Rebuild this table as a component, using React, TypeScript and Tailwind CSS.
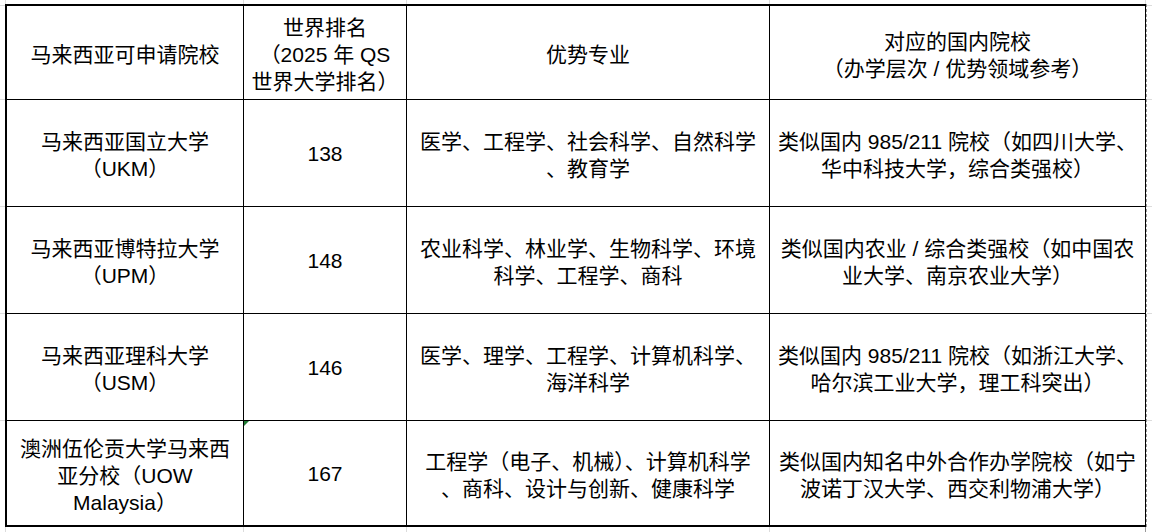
const header = [
  ["马来西亚可申请院校"],
  ["世界排名", "（2025 年 QS", "世界大学排名）"],
  ["优势专业"],
  ["对应的国内院校", "（办学层次 / 优势领域参考）"],
]

const rows = [
  {
    school: ["马来西亚国立大学", "（UKM）"],
    rank: "138",
    majors: ["医学、工程学、社会科学、自然科学", "、教育学"],
    match: ["类似国内 985/211 院校（如四川大学、", "华中科技大学，综合类强校）"],
  },
  {
    school: ["马来西亚博特拉大学", "（UPM）"],
    rank: "148",
    majors: ["农业科学、林业学、生物科学、环境", "科学、工程学、商科"],
    match: ["类似国内农业 / 综合类强校（如中国农", "业大学、南京农业大学）"],
  },
  {
    school: ["马来西亚理科大学", "（USM）"],
    rank: "146",
    majors: ["医学、理学、工程学、计算机科学、", "海洋科学"],
    match: ["类似国内 985/211 院校（如浙江大学、", "哈尔滨工业大学，理工科突出）"],
  },
  {
    school: ["澳洲伍伦贡大学马来西", "亚分校（UOW", "Malaysia）"],
    rank: "167",
    majors: ["工程学（电子、机械）、计算机科学", "、商科、设计与创新、健康科学"],
    match: ["类似国内知名中外合作办学院校（如宁", "波诺丁汉大学、西交利物浦大学）"],
  },
]

function Lines({ lines }: { lines: string[] }) {
  return (
    <>
      {lines.map((l, i) => (
        <span key={i} className="whitespace-pre">
          {l}
        </span>
      ))}
    </>
  )
}

const cell = "flex flex-col items-center justify-center text-center border-black"

export default function App() {
  return (
    <div className="w-[1152px] h-[532px] bg-white overflow-hidden flex flex-col text-black text-[21px] leading-[27px] font-['Liberation_Sans','Noto_Sans_CJK_SC',sans-serif]">
      {/* gridline stubs above the table */}
      <div className="h-[4px] flex shrink-0">
        <div className="w-[6px] border-r border-[#dcdcdc]" />
        <div className="w-[238px] border-r border-[#dcdcdc]" />
        <div className="w-[163px] border-r border-[#dcdcdc]" />
        <div className="w-[363px] border-r border-[#dcdcdc]" />
        <div className="w-[376px] border-r border-[#dcdcdc]" />
        <div className="flex-1" />
      </div>

      <div className="flex shrink-0">
        <div className="w-[5px] flex flex-col">
          <div className="h-[2px] border-b border-[#dcdcdc]" />
          <div className="h-[94px] border-b border-[#dcdcdc]" />
          <div className="h-[107px] border-b border-[#dcdcdc]" />
          <div className="h-[107px] border-b border-[#dcdcdc]" />
          <div className="h-[107px] border-b border-[#dcdcdc]" />
          <div className="flex-1" />
        </div>

        <div className="w-[1141px] h-[523px] border-l-2 border-t-2 border-r border-b-2 border-black grid grid-cols-[237px_163px_363px_375px] grid-rows-[94px_107px_107px_107px_104px]">
          {header.map((h, i) => (
            <div key={i} className={`${cell} pt-[4px] border-b ${i < 3 ? "border-r" : ""}`}>
              <Lines lines={h} />
            </div>
          ))}
          {rows.map((r, ri) => {
            const last = ri === rows.length - 1
            const b = last ? "" : "border-b"
            return [
              <div key={`${ri}a`} className={`${cell} pt-[4px] ${b} border-r`}>
                <Lines lines={r.school} />
              </div>,
              <div key={`${ri}b`} className={`${cell} pt-[1px] ${b} border-r relative`}>
                {last && (
                  <div className="absolute top-0 left-0 w-0 h-0 border-t-[5px] border-t-[#1f7a33] border-r-[5px] border-r-transparent" />
                )}
                {r.rank}
              </div>,
              <div key={`${ri}c`} className={`${cell} pt-[4px] ${b} border-r`}>
                <Lines lines={r.majors} />
              </div>,
              <div key={`${ri}d`} className={`${cell} pt-[4px] ${b}`}>
                <Lines lines={r.match} />
              </div>,
            ]
          })}
        </div>

        <div className="flex-1 flex flex-col border-l border-dashed border-l-[#9a9a9a]">
          <div className="h-[2px] border-b border-[#dcdcdc]" />
          <div className="h-[94px] border-b border-[#dcdcdc]" />
          <div className="h-[107px] border-b border-[#dcdcdc]" />
          <div className="h-[107px] border-b border-[#dcdcdc]" />
          <div className="h-[107px] border-b border-[#dcdcdc]" />
          <div className="flex-1" />
        </div>
      </div>

      {/* gridline stubs below the table */}
      <div className="flex-1 flex">
        <div className="w-[6px] border-r border-[#dcdcdc]" />
        <div className="w-[238px] border-r border-[#dcdcdc]" />
        <div className="w-[163px] border-r border-[#dcdcdc]" />
        <div className="w-[363px] border-r border-[#dcdcdc]" />
        <div className="w-[376px] border-r border-dashed border-[#9a9a9a]" />
        <div className="flex-1" />
      </div>
    </div>
  )
}
